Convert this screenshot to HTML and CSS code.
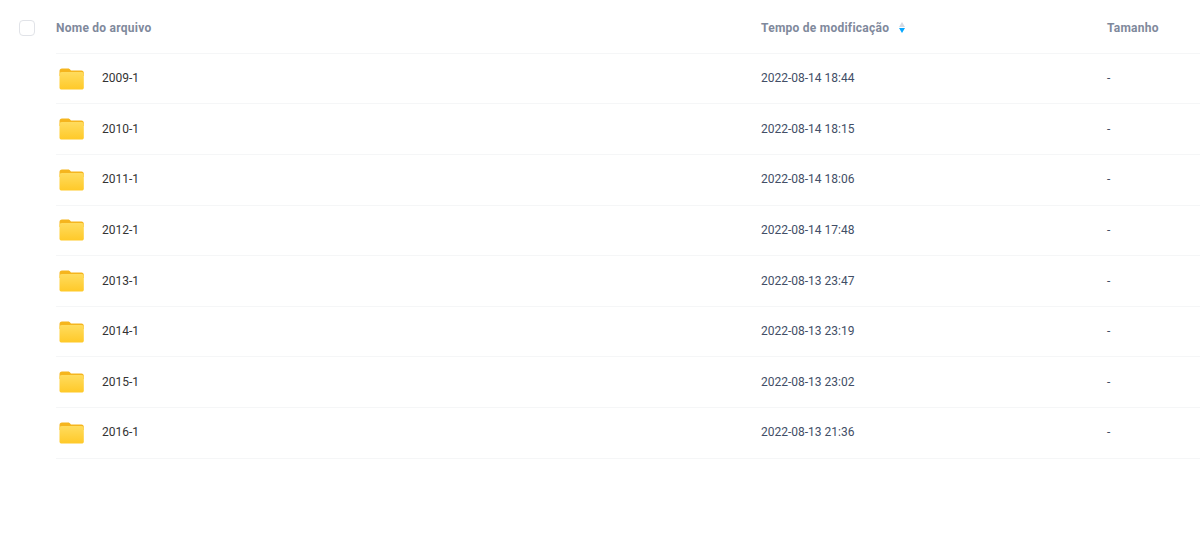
FILE: index.html
```html
<!DOCTYPE html>
<html lang="pt">
<head>
  <meta charset="UTF-8">
  <title>Arquivos</title>
  <link rel="stylesheet" href="styles.css">
</head>
<body>
  <svg class="icon-defs" width="0" height="0">
    <defs>
      <linearGradient id="folder-front" x1="0" y1="0" x2="0" y2="1">
        <stop offset="0" stop-color="#ffdc5e"/>
        <stop offset="1" stop-color="#ffc928"/>
      </linearGradient>
      <symbol id="folder" viewBox="0 0 25 22">
        <path d="M0.5 3C0.5 1.5 1.4 0.5 3 0.5H9C10.2 0.5 10.8 1 11.5 2L12 2.6H22.5C24 2.6 24.8 3.5 24.8 5V8H0.5Z" fill="#f5b51e"/>
        <path d="M0.5 6.2C0.5 4.8 1.4 4 2.8 4H22.6C24 4 24.8 4.8 24.8 6.2V19.4C24.8 20.8 24 21.6 22.6 21.6H2.8C1.4 21.6 0.5 20.8 0.5 19.4Z" fill="url(#folder-front)"/>
      </symbol>
    </defs>
  </svg>

  <div class="file-table">
    <div class="table-head">
      <div class="check-cell"><span class="checkbox"></span></div>
      <div class="head-row">
        <div class="col-name">Nome do arquivo</div>
        <div class="col-time">Tempo de modificação
          <span class="sorter"><i class="sort-up"></i><i class="sort-down"></i></span>
        </div>
        <div class="col-size">Tamanho</div>
      </div>
    </div>

    <div class="file-row">
      <div class="col-name"><svg class="folder-icon"><use href="#folder"/></svg>2009-1</div>
      <div class="col-time">2022-08-14 18:44</div>
      <div class="col-size">-</div>
    </div>
    <div class="file-row">
      <div class="col-name"><svg class="folder-icon"><use href="#folder"/></svg>2010-1</div>
      <div class="col-time">2022-08-14 18:15</div>
      <div class="col-size">-</div>
    </div>
    <div class="file-row">
      <div class="col-name"><svg class="folder-icon"><use href="#folder"/></svg>2011-1</div>
      <div class="col-time">2022-08-14 18:06</div>
      <div class="col-size">-</div>
    </div>
    <div class="file-row">
      <div class="col-name"><svg class="folder-icon"><use href="#folder"/></svg>2012-1</div>
      <div class="col-time">2022-08-14 17:48</div>
      <div class="col-size">-</div>
    </div>
    <div class="file-row">
      <div class="col-name"><svg class="folder-icon"><use href="#folder"/></svg>2013-1</div>
      <div class="col-time">2022-08-13 23:47</div>
      <div class="col-size">-</div>
    </div>
    <div class="file-row">
      <div class="col-name"><svg class="folder-icon"><use href="#folder"/></svg>2014-1</div>
      <div class="col-time">2022-08-13 23:19</div>
      <div class="col-size">-</div>
    </div>
    <div class="file-row">
      <div class="col-name"><svg class="folder-icon"><use href="#folder"/></svg>2015-1</div>
      <div class="col-time">2022-08-13 23:02</div>
      <div class="col-size">-</div>
    </div>
    <div class="file-row">
      <div class="col-name"><svg class="folder-icon"><use href="#folder"/></svg>2016-1</div>
      <div class="col-time">2022-08-13 21:36</div>
      <div class="col-size">-</div>
    </div>
  </div>
</body>
</html>
```

FILE: styles.css
```css
body {
  margin: 0;
  font-family: Roboto, "Liberation Sans", Arial, sans-serif;
  font-size: 12px;
  color: #424e66;
  background-color: #fff;
  overflow: hidden;
}

.icon-defs {
  display: block;
  height: 0;
}

.file-table {
  padding-left: 56px;
}

.table-head {
  position: relative;
}

.check-cell {
  position: absolute;
  left: -37px;
  top: 20px;
}

.checkbox {
  display: block;
  width: 14px;
  height: 14px;
  border: 1px solid #e1e3e8;
  border-radius: 4px;
}

.head-row,
.file-row {
  display: grid;
  grid-template-columns: 705px 346px 93px;
  align-items: center;
  border-bottom: 1px solid #f5f6f7;
  box-sizing: border-box;
}

.head-row {
  height: 53.9px;
  padding-top: 3px;
  font-weight: 700;
  letter-spacing: 0.25px;
  color: #7f899c;
}

.file-row {
  height: 50.6px;
  padding-bottom: 1px;
}

.file-row .col-name {
  display: flex;
  align-items: center;
  color: #333;
}

.folder-icon {
  width: 25px;
  height: 22px;
  margin: 1px 18px 0 3px;
}

.col-time {
  display: flex;
  align-items: center;
}

.head-row .col-time {
  gap: 10px;
}

.sorter {
  display: flex;
  flex-direction: column;
  gap: 1px;
}

.sorter i {
  display: block;
  width: 0;
  height: 0;
  border-left: 3.5px solid transparent;
  border-right: 3.5px solid transparent;
}

.sort-up {
  border-bottom: 5px solid #d5d9e2;
}

.sort-down {
  border-top: 5px solid #06a7ff;
}
```
